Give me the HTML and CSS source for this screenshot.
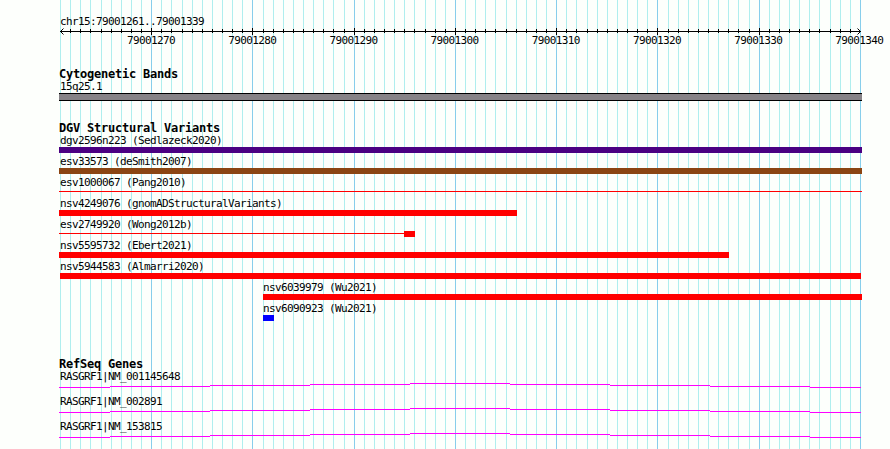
FILE: index.html
```
<!DOCTYPE html>
<html lang="en">
<head>
  <meta charset="UTF-8" />
  <title>chr15:79001261..79001339</title>
  <link rel="stylesheet" href="styles.css">
</head>
<body>

  <svg class="grid" id="grid" width="890" height="449"></svg>

  <div class="browser">
    <div class="region">chr15:79001261..79001339</div>
    <svg class="axis" id="axis" width="803" height="7">
      <path d="M1 3.5H802" />
      <path d="M4.5 0.5L1.5 3.5L4.5 6.5M798.5 0.5L801.5 3.5L798.5 6.5" class="arrow" />
    </svg>
    <div class="positions">
      <span>79001270</span>
      <span>79001280</span>
      <span>79001290</span>
      <span>79001300</span>
      <span>79001310</span>
      <span>79001320</span>
      <span>79001330</span>
      <span>79001340</span>
    </div>

    <section class="track bands">
      <h2>Cytogenetic Bands</h2>
      <div class="label">15q25.1</div>
      <div class="band"></div>
    </section>

    <section class="track variants">
      <h2>DGV Structural Variants</h2>
      <div class="feature">
        <div class="label">dgv2596n223 (Sedlazeck2020)</div>
        <div class="bar indigo"></div>
      </div>
      <div class="feature">
        <div class="label">esv33573 (deSmith2007)</div>
        <div class="bar brown"></div>
      </div>
      <div class="feature">
        <div class="label">esv1000067 (Pang2010)</div>
        <div class="bar line"></div>
      </div>
      <div class="feature">
        <div class="label">nsv4249076 (gnomADStructuralVariants)</div>
        <div class="bar red" style="width: 458px"></div>
      </div>
      <div class="feature">
        <div class="label">esv2749920 (Wong2012b)</div>
        <div class="split">
          <div class="bar line" style="width: 345px"></div>
          <div class="bar red" style="width: 11px"></div>
        </div>
      </div>
      <div class="feature">
        <div class="label">nsv5595732 (Ebert2021)</div>
        <div class="bar red" style="width: 670px"></div>
      </div>
      <div class="feature">
        <div class="label">nsv5944583 (Almarri2020)</div>
        <div class="bar red inset"></div>
      </div>
      <div class="feature shifted">
        <div class="label">nsv6039979 (Wu2021)</div>
        <div class="bar red"></div>
      </div>
      <div class="feature shifted">
        <div class="label">nsv6090923 (Wu2021)</div>
        <div class="bar blue" style="width: 11px"></div>
      </div>
    </section>

    <section class="track genes">
      <h2>RefSeq Genes</h2>
      <div class="gene">
        <div class="label">RASGRF1|NM_001145648</div>
        <svg class="intron" width="803" height="5"><use href="#intron" /></svg>
      </div>
      <div class="gene">
        <div class="label">RASGRF1|NM_002891</div>
        <svg class="intron" width="803" height="5"><use href="#intron" /></svg>
      </div>
      <div class="gene">
        <div class="label">RASGRF1|NM_153815</div>
        <svg class="intron" width="803" height="5"><use href="#intron" /></svg>
      </div>
    </section>
  </div>

  <svg class="defs" width="0" height="0">
    <defs>
      <path id="intron" d="M0 4.5H51M51 3.5H151M151 2.5H251M251 1.5H351M351 0.5H451M451 1.5H551M551 2.5H651M651 3.5H751M751 4.5H802" />
    </defs>
  </svg>

  <script src="grid.js"></script>
</body>
</html>
```
FILE: styles.css
```
body {
  margin: 0;
  height: 449px;
  overflow: hidden;
  background: #fdfffc;
  color: #000;
  font-family: "DejaVu Sans Mono", monospace;
  font-size: 11px;
  line-height: 13px;
  letter-spacing: -0.62px;
}

svg {
  display: block;
  shape-rendering: crispEdges;
}

/* grid runs behind every track */
.grid {
  position: absolute;
  top: 0;
  left: 0;
  z-index: -1;
}

.minor {
  fill: #afeeee;
}

.major {
  fill: #87ceeb;
}

.browser {
  width: 803px;
  padding: 15px 0 0 59px;
  white-space: nowrap;
}

.region,
.label {
  height: 13px;
  padding-left: 1px;
}

.axis path {
  stroke: #000;
  fill: none;
}

.axis .arrow {
  shape-rendering: auto;
}

.positions {
  display: flex;
  gap: 53.2px;
  height: 13px;
  margin-left: 68px;
  margin-top: -1px;
}

.positions span {
  flex: none;
  width: 48px;
}

.track h2 {
  height: 12px;
  margin: 0;
  font-size: 12px;
  line-height: 13px;
  letter-spacing: -0.225px;
}

.bands {
  margin-top: 21px;
}

.band {
  height: 6px;
  background: #868286;
  border-top: 1px solid #000;
  border-bottom: 1px solid #000;
}

.variants {
  margin-top: 21px;
}

.feature {
  height: 21px;
}

.shifted {
  margin-left: 204px;
}

.shifted .label {
  padding-left: 0;
}

.bar {
  height: 6px;
}

.line {
  height: 1px;
  margin-top: 2px;
  background: #f00;
}

.split {
  display: flex;
}

.inset {
  margin: 0 1px;
}

.indigo {
  background: #4b0082;
}

.brown {
  background: #8b4513;
}

.red {
  background: #f00;
}

.blue {
  background: #00f;
}

.genes {
  margin-top: 35px;
}

.gene {
  height: 25px;
}

.intron {
  stroke: #f0f;
}

.defs {
  position: absolute;
}
```
FILE: grid.js
```
const NS = "http://www.w3.org/2000/svg";
const grid = document.getElementById("grid");
const axis = document.getElementById("axis");

function addRect(parent, x, y, height, name) {
  const rect = document.createElementNS(NS, "rect");
  rect.setAttribute("x", x);
  rect.setAttribute("y", y);
  rect.setAttribute("width", 1);
  rect.setAttribute("height", height);
  if (name) rect.setAttribute("class", name);
  parent.appendChild(rect);
}

// one line per base, 79001261 to 79001340
for (let i = 0; i < 80; i++) {
  const x = 60 + Math.round(i * 800 / 79);
  const major = i % 10 === 9;
  addRect(grid, x, 0, 449, major ? "major" : "minor");
  if (i > 0 && i < 79) {
    addRect(axis, x - 59, major ? 0 : 1, major ? 7 : 4);
  }
}
```
